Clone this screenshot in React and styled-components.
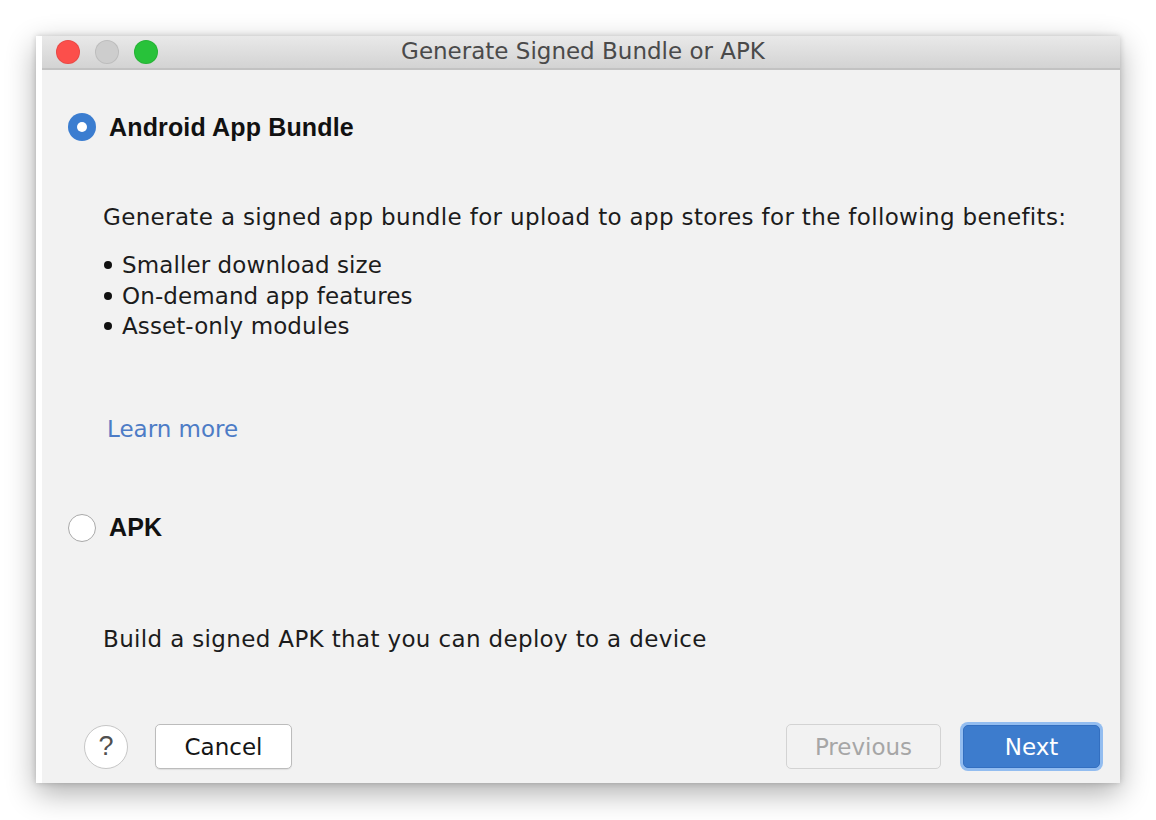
import React from 'react'
import styled, { createGlobalStyle } from 'styled-components'

const GlobalStyle = createGlobalStyle`
  html, body {
    margin: 0;
    padding: 0;
    background: #ffffff;
  }
  body {
    font-family: 'DejaVu Sans', 'Liberation Sans', sans-serif;
  }
`

const Page = styled.div`
  width: 1156px;
  height: 820px;
  padding: 36px 0 0 36px;
  box-sizing: border-box;
  overflow: hidden;
`
const Window = styled.div`
  width: 1084px;
  height: 747px;
  box-sizing: border-box;
  display: flex;
  flex-direction: column;
  background: #f2f2f2;
  border-left: 6px solid #ffffff;
  box-shadow: 0 10px 28px rgba(0, 0, 0, 0.32), 0 0 6px rgba(0, 0, 0, 0.18);
`
const TitleBar = styled.div`
  height: 32px;
  display: grid;
  grid-template-columns: 1fr auto 1fr;
  align-items: center;
  background: linear-gradient(#e9e9e9, #d3d3d3);
  border-bottom: 2px solid #c2c2c2;
`
const Lights = styled.div`
  display: flex;
  gap: 15px;
  padding-left: 14px;
`
const Light = styled.span`
  width: 24px;
  height: 24px;
  border-radius: 50%;
  background: ${p => p.color};
  box-shadow: inset 0 0 0 1px rgba(0, 0, 0, 0.08);
`
const Title = styled.div`
  font-size: 23px;
  line-height: 28px;
  margin: -3px 0 0 4px;
  color: #4a4a4a;
`
const Content = styled.div`
  flex: 1;
  display: flex;
  flex-direction: column;
  padding: 42px 0 0 26px;
  color: #1c1c1c;
`
const Option = styled.label`
  display: flex;
  align-items: center;
  gap: 13px;
  height: 30px;
  margin-top: ${p => p.top || 0}px;
  font-family: 'Liberation Sans', Arial, sans-serif;
  font-size: 25px;
  font-weight: bold;
  letter-spacing: 0.15px;
  color: #111;
`
const Radio = styled.span`
  width: 28px;
  height: 28px;
  box-sizing: border-box;
  border-radius: 50%;
  display: flex;
  align-items: center;
  justify-content: center;
  background: ${p => (p.checked ? '#3b7dd0' : '#ffffff')};
  border: ${p => (p.checked ? 'none' : '1.5px solid #a9a9a9')};
  &::after {
    content: '';
    display: ${p => (p.checked ? 'block' : 'none')};
    width: 10px;
    height: 10px;
    border-radius: 50%;
    background: #ffffff;
  }
`
const Text = styled.p`
  margin: ${p => p.top || 0}px 0 0 35px;
  font-size: 23px;
  line-height: 30px;
  letter-spacing: 0.35px;
`
const List = styled.ul`
  list-style: none;
  margin: 18px 0 0 35px;
  padding: 0;
  font-size: 23px;
  line-height: 30.5px;
  letter-spacing: 0.1px;
`
const Item = styled.li`
  display: flex;
  align-items: center;
  &::before {
    content: '';
    width: 8px;
    height: 8px;
    border-radius: 50%;
    background: #111;
    margin: 0 10px 0 1px;
  }
`
const Link = styled.a`
  margin: 72px 0 0 39px;
  font-size: 23px;
  line-height: 30px;
  color: #4d7cc6;
  text-decoration: none;
  align-self: flex-start;
`
const Footer = styled.div`
  display: flex;
  align-items: center;
  padding: 0 20px 14px 16px;
`
const Help = styled.button`
  width: 44px;
  height: 44px;
  border-radius: 50%;
  border: 1px solid #c6c6c6;
  background: #ffffff;
  font-family: 'Liberation Sans', Arial, sans-serif;
  font-size: 27px;
  color: #505050;
  padding: 0;
  margin-right: 27px;
`
const Button = styled.button`
  height: 45px;
  width: ${p => p.w}px;
  box-sizing: border-box;
  border-radius: 5px;
  font-family: inherit;
  font-size: 23px;
  padding: 0;
  border: 1px solid ${p => (p.disabled ? '#d3d3d3' : '#bcbcbc')};
  background: ${p => (p.disabled ? '#f2f2f2' : '#ffffff')};
  color: ${p => (p.disabled ? '#a6a6a6' : '#151515')};
  box-shadow: ${p => (p.disabled ? 'none' : '0 1px 1px rgba(0,0,0,0.08)')};
`
const Primary = styled.button`
  height: 43px;
  width: 137px;
  box-sizing: border-box;
  border-radius: 5px;
  font-family: inherit;
  font-size: 23px;
  padding: 0;
  border: 1px solid #336fc0;
  background: #3d7ccd;
  color: #ffffff;
  box-shadow: 0 0 0 3px #93bdf0;
  margin-left: 22px;
`
const Spacer = styled.div`
  flex: 1;
`

export default function App() {
  return (
    <Page>
      <GlobalStyle />
      <Window>
        <TitleBar>
          <Lights>
            <Light color='#fc4f4b' />
            <Light color='#cdcdcd' />
            <Light color='#28c23a' />
          </Lights>
          <Title>Generate Signed Bundle or APK</Title>
          <div />
        </TitleBar>
        <Content>
          <Option>
            <Radio checked />
            Android App Bundle
          </Option>
          <Text top={60}>
            Generate a signed app bundle for upload to app stores for the
            following benefits:
          </Text>
          <List>
            <Item>Smaller download size</Item>
            <Item>On-demand app features</Item>
            <Item>Asset-only modules</Item>
          </List>
          <Link href='#'>Learn more</Link>
          <Option top={69}>
            <Radio />
            APK
          </Option>
          <Text top={81}>Build a signed APK that you can deploy to a device</Text>
          <Spacer />
          <Footer>
            <Help>?</Help>
            <Button w={137}>Cancel</Button>
            <Spacer />
            <Button w={155} disabled>
              Previous
            </Button>
            <Primary>Next</Primary>
          </Footer>
        </Content>
      </Window>
    </Page>
  )
}
